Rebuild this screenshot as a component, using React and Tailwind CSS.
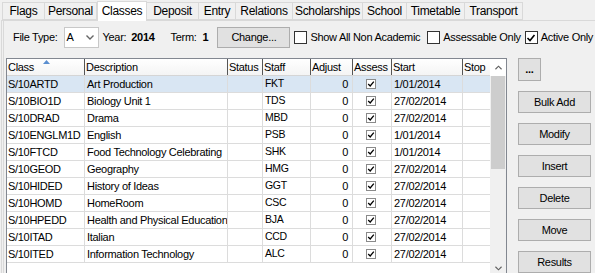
import { useState } from 'react'

const tabs = [
  ['Flags', 43], ['Personal', 52], ['Classes', 50], ['Deposit', 52], ['Entry', 37],
  ['Relations', 57], ['Scholarships', 70], ['School', 44], ['Timetable', 58], ['Transport', 58],
]

const cols = [
  { key: 'cls', label: 'Class', w: 'w-[77px]' },
  { key: 'desc', label: 'Description', w: 'w-[143px]' },
  { key: 'status', label: 'Status', w: 'w-[35px]' },
  { key: 'staff', label: 'Staff', w: 'w-[48px]' },
  { key: 'adjust', label: 'Adjust', w: 'w-[42px]' },
  { key: 'assess', label: 'Assess', w: 'w-[39px]' },
  { key: 'start', label: 'Start', w: 'w-[71px]' },
  { key: 'stop', label: 'Stop', w: 'w-[28px]' },
]

const rows = [
  ['S/10ARTD', 'Art Production', 'FKT', '1/01/2014'],
  ['S/10BIO1D', 'Biology Unit 1', 'TDS', '27/02/2014'],
  ['S/10DRAD', 'Drama', 'MBD', '27/02/2014'],
  ['S/10ENGLM1D', 'English', 'PSB', '1/01/2014'],
  ['S/10FTCD', 'Food Technology Celebrating', 'SHK', '1/01/2014'],
  ['S/10GEOD', 'Geography', 'HMG', '27/02/2014'],
  ['S/10HIDED', 'History of Ideas', 'GGT', '27/02/2014'],
  ['S/10HOMD', 'HomeRoom', 'CSC', '27/02/2014'],
  ['S/10HPEDD', 'Health and Physical Education', 'BJA', '27/02/2014'],
  ['S/10ITAD', 'Italian', 'CCD', '27/02/2014'],
  ['S/10ITED', 'Information Technology', 'ALC', '27/02/2014'],
]

function Check({ on, small }) {
  return (
    <span className={`shrink-0 inline-flex items-center justify-center bg-white border ${small ? 'w-[10px] h-[10px] border-[#8a8a8a]' : 'w-[13px] h-[13px] border-[#333]'}`}>
      {on && (
        <svg viewBox="0 0 10 10" className={small ? 'w-[8px] h-[8px]' : 'w-[10px] h-[10px]'}>
          <path d="M1.5 5 L4 7.5 L8.5 2" fill="none" stroke="#000" strokeWidth="1.6" />
        </svg>
      )}
    </span>
  )
}

function Btn({ children, className = '' }) {
  return (
    <button className={`shrink-0 bg-[#e1e1e1] border border-[#adadad] text-[11px] text-black flex items-center justify-center whitespace-nowrap ${className}`}>
      {children}
    </button>
  )
}

export default function App() {
  const [sel] = useState(0)
  return (
    <div className="w-[595px] h-[273px] overflow-hidden bg-[#f0f0f0] text-[11px] tracking-[-0.3px] text-black whitespace-nowrap" style={{ fontFamily: '"Liberation Sans", Arial, sans-serif' }}>
      {/* tab strip */}
      <div className="flex items-end h-[20px] pl-[2px]">
        {tabs.map(([t, w]) => t === 'Classes' ? (
          <div key={t} style={{ width: w }} className="shrink-0 h-[20px] -mb-px z-10 bg-white border border-b-0 border-[#d9d9d9] flex items-center justify-center text-[12px] pb-[2px]">{t}</div>
        ) : (
          <div key={t} style={{ width: w }} className="shrink-0 h-[18px] bg-[#f0f0f0] border border-l-0 first:border-l border-[#d9d9d9] flex items-center justify-center text-[12px]">{t}</div>
        ))}
      </div>

      {/* panel */}
      <div className="ml-[1px] h-[260px] border-t border-l border-[#d9d9d9] flex flex-col">
        <div className="ml-[1px] h-full border-l border-[#d9d9d9] flex flex-col">
          {/* toolbar */}
          <div className="flex items-center h-[21px] mt-[6px] pl-[9px]">
            <span>File Type:</span>
            <div className="shrink-0 ml-[6px] w-[35px] h-[21px] bg-white border border-[#c8c8c8] flex items-center justify-between pl-[2px] pr-[4px]">
              <span>A</span>
              <svg viewBox="0 0 8 5" className="w-[8px] h-[5px]"><path d="M0.5 0.5 L4 4 L7.5 0.5" fill="none" stroke="#666" strokeWidth="1.4" /></svg>
            </div>
            <span className="ml-[4px]">Year:</span>
            <span className="ml-[5px] font-bold">2014</span>
            <span className="ml-[16px]">Term:</span>
            <span className="ml-[6px] font-bold">1</span>
            <Btn className="ml-[9px] w-[73px] h-[21px]">Change...</Btn>
            <label className="ml-[4px] flex items-center gap-[3px]"><Check /><span>Show All Non Academic</span></label>
            <label className="ml-[7px] flex items-center gap-[3px]"><Check /><span>Assessable Only</span></label>
            <label className="ml-[4px] flex items-center gap-[3px]"><Check on /><span>Active Only</span></label>
          </div>

          {/* body */}
          <div className="flex mt-[10px] pl-[2px]">
            <div className="shrink-0 w-[501px] h-[220px] border border-[#828790] bg-white flex">
              <div className="flex flex-col">
                <div className="flex h-[17px] border-b border-[#d5d5d5] bg-gradient-to-b from-white to-[#f4f4f4]">
                  {cols.map((c, i) => (
                    <div key={c.key} className={`${c.w} shrink-0 relative flex items-center pl-[1px] overflow-hidden ${i > 0 ? 'border-l border-[#555]' : ''}`}>
                      {c.label}
                      {i === 0 && (
                        <svg viewBox="0 0 7 4" className="absolute left-[36px] top-[1px] w-[7px] h-[4px]"><path d="M0 4 L3.5 0 L7 4 Z" fill="#5b8fd0" /></svg>
                      )}
                    </div>
                  ))}
                </div>
                {rows.map((r, i) => (
                  <div key={r[0]} className={`flex h-[17px] border-b border-[#dcdcdc] ${i === sel ? 'bg-[#d9e6f3]' : ''}`}>
                    <div className="w-[77px] shrink-0 pl-[1px] flex items-center overflow-hidden">{r[0]}</div>
                    <div className="w-[143px] shrink-0 pl-[2px] flex items-center overflow-hidden border-l border-[#dcdcdc]">{r[1]}</div>
                    <div className="w-[35px] shrink-0 border-l border-[#dcdcdc]" />
                    <div className="w-[48px] shrink-0 pl-[2px] flex items-center border-l border-[#dcdcdc] text-[10.5px]">{r[2]}</div>
                    <div className="w-[42px] shrink-0 pr-[4px] flex items-center justify-end border-l border-[#dcdcdc]">0</div>
                    <div className="w-[39px] shrink-0 pl-[13px] flex items-center border-l border-[#dcdcdc]"><Check on small /></div>
                    <div className="w-[71px] shrink-0 pl-[2px] flex items-center border-l border-[#dcdcdc]">{r[3]}</div>
                    <div className="w-[28px] shrink-0 border-l border-[#dcdcdc]" />
                  </div>
                ))}
              </div>
              {/* scrollbar */}
              <div className="w-[16px] shrink-0 flex flex-col bg-[#f0f0f0]">
                <div className="h-[17px] bg-white flex items-center justify-center">
                  <svg viewBox="0 0 8 5" className="w-[7px] h-[5px]"><path d="M0.5 4.5 L4 1 L7.5 4.5" fill="none" stroke="#606060" strokeWidth="1.3" /></svg>
                </div>
                <div className="h-[93px] mx-[1px] bg-[#cdcdcd]" />
                <div className="flex-1" />
                <div className="h-[17px] flex items-center justify-center">
                  <svg viewBox="0 0 8 5" className="w-[7px] h-[5px]"><path d="M0.5 0.5 L4 4 L7.5 0.5" fill="none" stroke="#606060" strokeWidth="1.3" /></svg>
                </div>
              </div>
            </div>

            {/* buttons */}
            <div className="ml-[11px] flex flex-col gap-[10px]">
              <Btn className="w-[23px] h-[23px] font-bold">...</Btn>
              <Btn className="w-[73px] h-[22px]">Bulk Add</Btn>
              <Btn className="w-[73px] h-[22px]">Modify</Btn>
              <Btn className="w-[73px] h-[22px]">Insert</Btn>
              <Btn className="w-[73px] h-[22px]">Delete</Btn>
              <Btn className="w-[73px] h-[22px]">Move</Btn>
              <Btn className="w-[73px] h-[22px]">Results</Btn>
            </div>
          </div>
        </div>
      </div>
    </div>
  )
}
